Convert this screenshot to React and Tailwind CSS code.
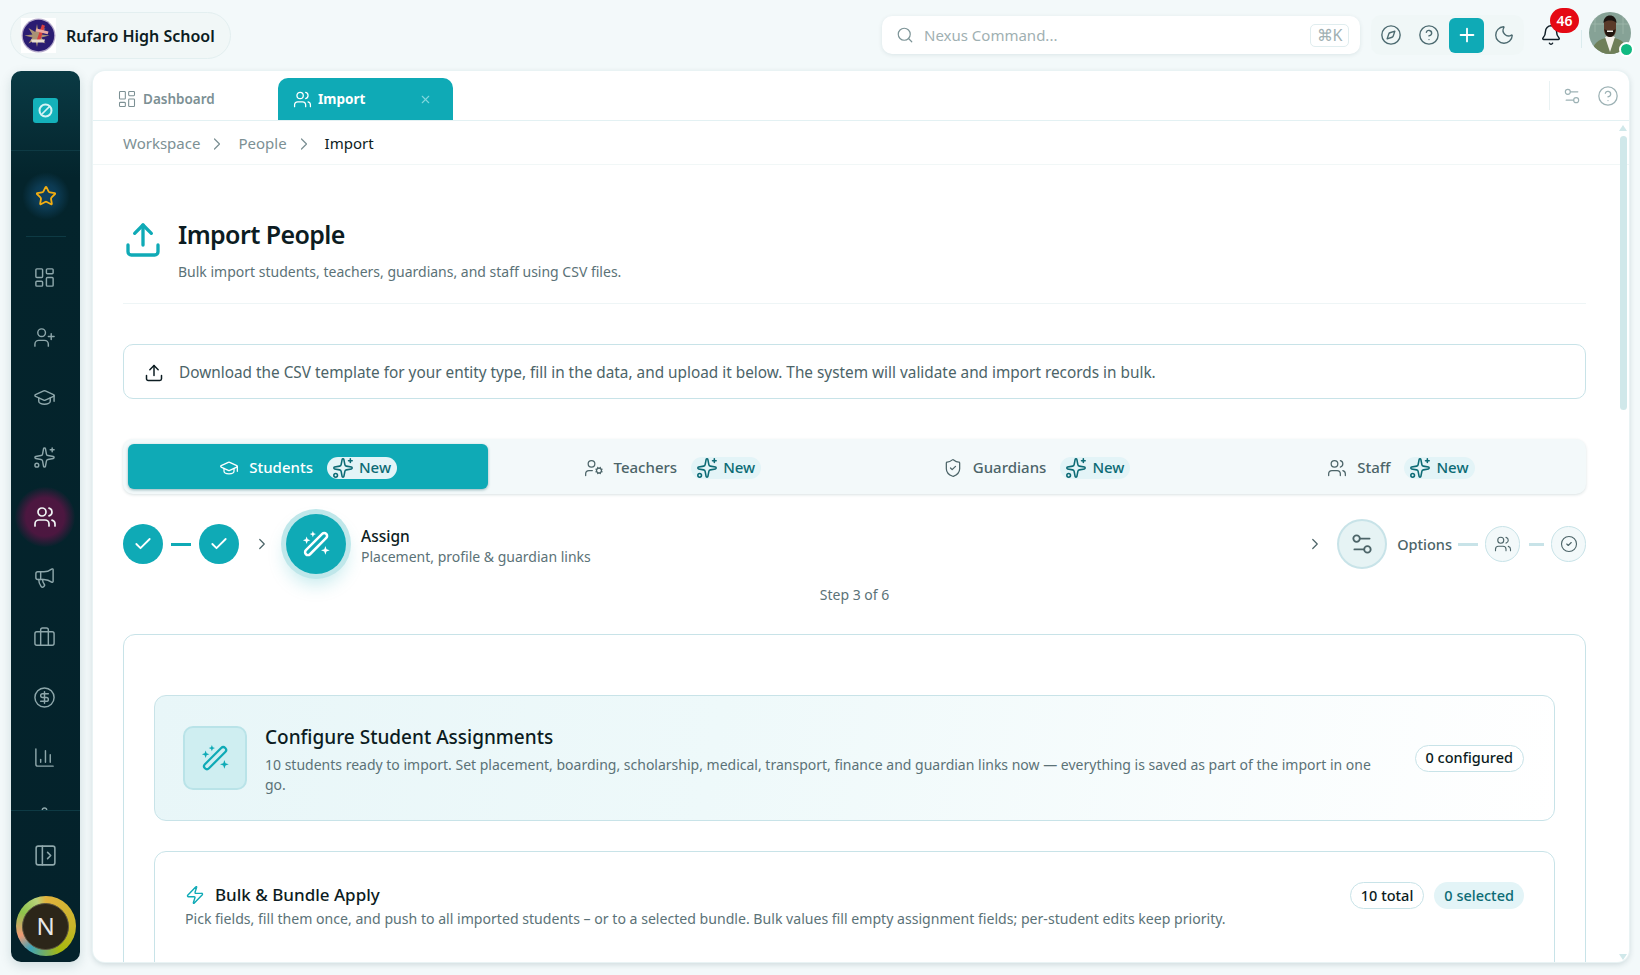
import {
  Bell,
  Briefcase,
  ChartColumn,
  Check,
  ChevronRight,
  CircleCheck,
  CircleDollarSign,
  CircleHelp,
  Compass,
  GraduationCap,
  LayoutDashboard,
  Megaphone,
  Moon,
  PanelLeftOpen,
  Plus,
  Search,
  Settings,
  Settings2,
  ShieldCheck,
  Sparkles,
  Star,
  Upload,
  UserCog,
  UserPlus,
  Users,
  X,
  Zap,
} from 'lucide-react';

const FONT = "font-['Noto_Sans','Liberation_Sans',sans-serif]";

const RAIL_ICONS = [LayoutDashboard, UserPlus, GraduationCap, Sparkles];
const RAIL_ICONS_2 = [Megaphone, Briefcase, CircleDollarSign, ChartColumn, Settings];

const PEOPLE_TABS = [
  { label: 'Students', icon: GraduationCap, active: true },
  { label: 'Teachers', icon: UserCog },
  { label: 'Guardians', icon: ShieldCheck },
  { label: 'Staff', icon: Users },
];

function WandIcon({ size, strokeWidth = 2 }) {
  return (
    <svg width={size} height={size} viewBox="0 0 24 24" fill="none">
      <rect
        x="9.8"
        y="0.5"
        width="4.6"
        height="23"
        rx="2.3"
        stroke="currentColor"
        strokeWidth={strokeWidth}
        transform="rotate(45 12 12)"
      />
      <path d="M9.5 1.5l.7 1.8 1.8.7-1.8.7-.7 1.8-.7-1.8L7 4l1.8-.7z" fill="currentColor" />
      <path d="M4.5 6l.8 2.2 2.2.8-2.2.8-.8 2.2-.8-2.2L1.5 9l2.2-.8z" fill="currentColor" />
      <path d="M19.5 13.5l.9 2.6 2.6.9-2.6.9-.9 2.6-.9-2.6-2.6-.9 2.6-.9z" fill="currentColor" />
    </svg>
  );
}

function SchoolLogo() {
  return (
    <svg width="35" height="35" viewBox="0 0 35 35" className="shrink-0">
      <rect width="35" height="35" fill="#ffffff" />
      <circle cx="17.5" cy="17.5" r="17" fill="#b3a8c9" />
      <circle cx="17.5" cy="17.5" r="15.7" fill="#2a1c72" />
      <path d="M16 6l1.4 8 7-4-4 6.5 8 1-8 2 4 6-7-3.5-1.4 7-1.6-7-7 3.5 4-6-8-2 8-1-4-6.5 7 4z" fill="#a99274" />
      <path d="M21 6.5l3 1.2-5.2 15.5-3-1.2z" fill="#d8413f" />
      <path d="M15.5 10.5l12 3-.8 2.8-12-3z" fill="#e8a8a0" />
      <path d="M10 21.5h14l-1 3H11z" fill="#e9dfcf" />
    </svg>
  );
}

function Avatar() {
  return (
    <svg width="42" height="42" viewBox="0 0 42 42" className="rounded-full">
      <rect width="42" height="42" fill="#86a296" />
      <path d="M0 12h42M6 0v20M34 4v18" stroke="#a5bcb0" strokeWidth="0.7" />
      <path d="M3 42c0-10 6-15 18-17 12 2 18 7 18 17z" fill="#6f7f58" />
      <path d="M16 25l5 15 5-15-5-2z" fill="#f3f1ea" />
      <path d="M15 11c0-4 2.500-6 6-6s6 2 6 6v6c0 5-2.500 8-6 8s-6-3-6-8z" fill="#5a3a29" />
      <path d="M14.500 11c0-5 3-7.500 6.500-7.500s6.500 2.500 6.500 7.500c-2-2-4-2.500-6.500-2.500s-4.500.5-6.500 2.500z" fill="#1b1410" />
      <path d="M15.500 17c2 2 9 2 11 0-.5 5-2.500 8-5.500 8s-5-3-5.500-8z" fill="#21160f" />
      <path d="M18 18.500h6v1.600h-6z" fill="#f4f1ea" />
    </svg>
  );
}

function NewChip() {
  return (
    <span className="flex items-center gap-[5px] rounded-full pl-[5px] pr-[6px] h-[22px] text-[15px] font-medium bg-[#e3f4f7] text-[#0c6b75]">
      <Sparkles size={22} strokeWidth={1.7} />
      New
    </span>
  );
}

function Rail() {
  return (
    <aside className="w-[69px] shrink-0 rounded-[10px] overflow-hidden flex flex-col items-center bg-[linear-gradient(180deg,#0a3a44_0%,#04242c_12%,#04222b_100%)] shadow-[0_4px_12px_rgba(0,60,70,0.15)]">
      <div className="h-[80px] shrink-0 w-full flex items-center justify-center border-b border-[#0e3a44]">
        <div className="w-[25px] h-[25px] rounded-[3px] bg-[#14b1ba] flex items-center justify-center">
          <svg width="17" height="17" viewBox="0 0 17 17" fill="none">
            <circle cx="8.500" cy="8.500" r="6" stroke="#d5f3f5" strokeWidth="2" />
            <path d="M5 12 12.500 4.500" stroke="#d5f3f5" strokeWidth="1.700" />
          </svg>
        </div>
      </div>
      <div className="h-[86px] shrink-0 w-10 flex items-center justify-center border-b border-[#0e3a44]">
        <div className="mt-[5px] w-12 h-12 shrink-0 rounded-full flex items-center justify-center bg-[radial-gradient(circle,#0f4162_0%,#0c3a52_35%,rgba(4,34,43,0)_70%)]">
          <Star size={22} strokeWidth={2} className="text-[#f2ad12]" />
        </div>
      </div>
      <div className="flex-1 min-h-0 w-full flex flex-col items-center pt-[10px] pr-[2px] overflow-hidden">
        {RAIL_ICONS.map((Icon, i) => (
          <div key={i} className="h-[60px] shrink-0 flex items-center justify-center text-[#8ea7ab]">
            <Icon size={23} strokeWidth={1.5} />
          </div>
        ))}
        <div className="h-[60px] shrink-0 flex items-center justify-center">
          <div className="w-[60px] h-[60px] rounded-full bg-[radial-gradient(circle,#4f1741_0%,#4c1740_45%,rgba(4,34,43,0)_72%)] flex items-center justify-center text-[#f0f4f4]">
            <Users size={24} strokeWidth={1.7} />
          </div>
        </div>
        {RAIL_ICONS_2.map((Icon, i) => (
          <div key={i} className="h-[60px] shrink-0 flex items-center justify-center text-[#8ea7ab]">
            <Icon size={23} strokeWidth={1.5} />
          </div>
        ))}
      </div>
      <div className="w-full border-t border-[#0e3a44] flex flex-col items-center">
        <div className="h-[85px] pt-[3px] flex items-center justify-center text-[#8ea7ab]">
          <PanelLeftOpen size={25} strokeWidth={1.5} />
        </div>
        <div className="mb-1.5 w-[60px] h-[60px] rounded-full bg-[conic-gradient(#e2b33d_0deg,#c9b52a_90deg,#a7b80e_150deg,#3fa4b8_215deg,#ef9a74_250deg,#8dc34b_300deg,#b8d37a_340deg,#e2b33d_360deg)] flex items-center justify-center">
          <div className="w-[47px] h-[47px] rounded-full bg-[#2c2619] border border-[#5a5440] flex items-center justify-center text-[#e8e8e8] text-[24px] font-normal">
            N
          </div>
        </div>
      </div>
    </aside>
  );
}

function TopBar() {
  return (
    <header className="h-[71px] pl-2.5 pr-[9px] flex items-start">
      <div className="mt-3 h-[47px] w-[221px] rounded-full bg-[#f1f7f7] border border-[#e3eff0] pl-2.5 flex items-center gap-2.5">
        <SchoolLogo />
        <span className="text-[16px] font-semibold text-[#0c1c22] whitespace-nowrap">Rufaro High School</span>
      </div>
      <div className="ml-auto flex items-start">
        <div className="mt-4 w-[478px] h-[38px] rounded-[10px] bg-white shadow-[0_1px_4px_rgba(0,60,70,0.1)] flex items-center pl-[14px] pr-[11px]">
          <Search size={18} strokeWidth={1.6} className="text-[#7d9497]" />
          <span className="ml-2.5 pt-[1px] text-[15px] text-[#9fb0b2]">Nexus Command...</span>
          <span className="ml-auto w-[39px] h-[23px] rounded-[5px] border border-[#e0edef] flex items-center justify-center text-[16px] text-[#9fb0b2]">
            ⌘K
          </span>
        </div>
        <div className="mt-[15px] ml-[11px] w-[153px] h-10 rounded-[10px] bg-[#f0f7f7] flex items-center pl-[9px] text-[#4c6a70]">
          <Compass size={22} strokeWidth={1.5} />
          <CircleHelp size={22} strokeWidth={1.5} className="ml-4" />
          <div className="ml-[9px] w-[35px] h-[35px] rounded-[6px] bg-[#0faab6] flex items-center justify-center text-white">
            <Plus size={22} strokeWidth={2} />
          </div>
          <Moon size={22} strokeWidth={1.5} className="ml-[9px]" />
        </div>
        <div className="relative mt-[15px] ml-[7px] w-10 h-10 flex items-center justify-center text-[#0f1e26]">
          <Bell size={22} strokeWidth={1.6} />
          <span className="absolute -top-[7px] left-[19px] w-[29px] h-[25px] rounded-full bg-[#e50914] text-white text-[14px] font-semibold flex items-center justify-center">
            46
          </span>
        </div>
        <div className="mt-[30px] ml-[10px] w-px h-[18px] bg-[#dbecee]" />
        <div className="relative mt-3 ml-[7px]">
          <Avatar />
          <span className="absolute -right-[3px] -bottom-[3px] w-[15px] h-[15px] rounded-full bg-[#10b981] border-2 border-white" />
        </div>
      </div>
    </header>
  );
}

function DocTabs() {
  return (
    <div className="h-[50px] shrink-0 border-b border-[#e3f1f3] flex items-end pl-2">
      <div className="w-[177px] h-[42px] pl-4 flex items-center gap-[6px] text-[#7c9094] text-[13.5px] font-semibold">
        <LayoutDashboard size={20} strokeWidth={1.3} />
        <span className="pt-[1px]">Dashboard</span>
      </div>
      <div className="w-[175px] h-[42px] rounded-t-[10px] bg-[#0faab6] text-white flex items-center pl-[15px] text-[13.5px] font-bold">
        <Users size={19} strokeWidth={1.6} />
        <span className="ml-[6px] pt-[1px]">Import</span>
        <X size={13} className="ml-auto mr-[21px] text-[#7fd6dc]" />
      </div>
      <div className="ml-auto self-stretch flex items-center pr-[10px] gap-[15px] text-[#9db2b5] my-2.5 pl-[12px] border-l border-[#e9f2f3]">
        <Settings2 size={20} strokeWidth={1.4} />
        <CircleHelp size={22} strokeWidth={1.4} />
      </div>
    </div>
  );
}

function PeopleTabs() {
  return (
    <div className="mt-[40px] h-[55px] rounded-[10px] bg-[#f3f9fa] shadow-[0_1px_3px_rgba(0,60,70,0.15)] p-[5px] grid grid-cols-4 gap-1">
      {PEOPLE_TABS.map((t) => {
        const Icon = t.icon;
        return (
          <div
            key={t.label}
            className={`flex items-center justify-center gap-2.5 rounded-[6px] pt-[2px] text-[15px] font-medium ${
              t.active
                ? 'bg-[#0faab6] text-white shadow-[0_1px_3px_rgba(0,80,90,0.4)]'
                : 'text-[#4c6468]'
            }`}
          >
            <Icon size={20} strokeWidth={1.5} />
            {t.label}
            <span className="ml-1">
              <NewChip />
            </span>
          </div>
        );
      })}
    </div>
  );
}

function DoneStep() {
  return (
    <div className="w-10 h-10 rounded-full bg-[#0faab6] flex items-center justify-center text-white">
      <Check size={20} strokeWidth={2.2} />
    </div>
  );
}

function Stepper() {
  return (
    <>
      <div className="mt-[15px] h-[70px] flex items-center">
        <DoneStep />
        <div className="mx-2 w-5 h-[3px] bg-[#0faab6]" />
        <DoneStep />
        <ChevronRight size={18} strokeWidth={1.6} className="ml-[14px] text-[#4c6468]" />
        <div className="ml-[15px] w-[60px] h-[60px] rounded-full bg-[#0faab6] text-white flex items-center justify-center shadow-[0_0_0_5px_#bfe7ea,0_10px_18px_rgba(15,170,182,0.25)]">
          <WandIcon size={30} strokeWidth={2} />
        </div>
        <div className="ml-[15px] pt-[3px]">
          <div className="text-[15.5px] font-medium leading-[22px] text-[#0c1c22]">Assign</div>
          <div className="text-[14px] leading-[20px] text-[#5b7277]">Placement, profile &amp; guardian links</div>
        </div>
        <ChevronRight size={18} strokeWidth={1.6} className="ml-auto text-[#4c6468]" />
        <div className="ml-[13px] w-[50px] h-[50px] rounded-full bg-[#e6f3f4] border-2 border-[#c8e3e8] flex items-center justify-center text-[#4c6468]">
          <Settings2 size={26} strokeWidth={1.7} />
        </div>
        <span className="ml-[10px] pt-[2px] text-[14.5px] font-medium text-[#4c6468]">Options</span>
        <div className="ml-[6px] mr-[7px] w-5 h-[3px] bg-[#c8e3e8]" />
        <div className="w-[35px] h-9 rounded-full bg-[#f3f9fa] border border-[#c8e3e8] flex items-center justify-center text-[#4c6468]">
          <Users size={18} strokeWidth={1.5} />
        </div>
        <div className="ml-[9px] mr-[7px] w-[15px] h-[3px] bg-[#c8e3e8]" />
        <div className="w-[35px] h-9 rounded-full bg-[#f3f9fa] border border-[#c8e3e8] flex items-center justify-center text-[#4c6468]">
          <CircleCheck size={18} strokeWidth={1.5} />
        </div>
      </div>
      <div className="mt-[6px] text-center text-[14px] leading-5 text-[#5b7277]">Step 3 of 6</div>
    </>
  );
}

function Chip({ children, filled }) {
  return (
    <span
      className={`h-[27px] px-2.5 rounded-full flex items-center text-[14.5px] font-medium whitespace-nowrap ${
        filled ? 'bg-[#e3f4f7] text-[#0c6b75]' : 'bg-white border border-[#c8e3e8] text-[#0c1c22]'
      }`}
    >
      {children}
    </span>
  );
}

function WizardCard() {
  return (
    <div className="mt-[29px] border border-[#c8e3e8] rounded-[12px] px-[30px] pt-[60px] pb-10">
      <div className="h-[126px] rounded-[12px] border border-[#c8e3e8] bg-[linear-gradient(100deg,#e8f6f8_0%,#eef9fa_40%,#ffffff_100%)] pl-7 pr-[30px] flex items-center">
        <div className="w-16 h-16 shrink-0 rounded-[10px] bg-[#cfeef1] border-2 border-[#b9e3e8] flex items-center justify-center text-[#0faab6]">
          <WandIcon size={30} strokeWidth={1.8} />
        </div>
        <div className="ml-[18px] pt-[2px] flex-1">
          <div className="text-[19px] font-medium leading-7 text-[#0c1c22]">Configure Student Assignments</div>
          <p className="mt-1 text-[14px] leading-5 text-[#5b7277]">
            10 students ready to import. Set placement, boarding, scholarship, medical, transport, finance and guardian
            links now — everything is saved as part of the import in one go.
          </p>
        </div>
        <div className="ml-[30px] shrink-0">
          <Chip>0 configured</Chip>
        </div>
      </div>
      <div className="mt-[30px] h-[200px] rounded-[12px] border border-[#c8e3e8] pl-[30px] pr-[30px] pt-[29px]">
        <div className="flex items-start">
          <div className="flex-1">
            <div className="flex items-center gap-2.5">
              <Zap size={20} strokeWidth={1.7} className="text-[#0faab6]" />
              <span className="text-[17px] font-medium leading-7 text-[#0c1c22]">Bulk &amp; Bundle Apply</span>
            </div>
            <p className="text-[14.1px] leading-5 text-[#5b7277]">
              Pick fields, fill them once, and push to all imported students – or to a selected bundle. Bulk values fill
              empty assignment fields; per-student edits keep priority.
            </p>
          </div>
          <div className="pt-[1px] flex gap-2.5">
            <Chip>10 total</Chip>
            <Chip filled>0 selected</Chip>
          </div>
        </div>
      </div>
    </div>
  );
}

export default function App() {
  return (
    <div className={`${FONT} w-[1640px] h-[975px] overflow-hidden bg-[#f3f9fa]`}>
      <TopBar />
      <div className="h-[891px] pl-[11px] pr-[11px] flex gap-[13px]">
        <Rail />
        <main className="flex-1 min-w-0 rounded-[12px] bg-white shadow-[0_0_0_1px_#e9f3f4,0_2px_6px_rgba(0,50,60,0.18)] overflow-hidden flex flex-col">
          <DocTabs />
          <div className="relative flex-1 min-h-0 overflow-hidden">
            <div className="h-[44px] pt-[2px] border-b border-[#f1f7f7] pl-[30px] flex items-center text-[15px] text-[#7c9094]">
              Workspace
              <ChevronRight size={20} strokeWidth={1.5} className="ml-[7px] mr-[11px]" />
              People
              <ChevronRight size={20} strokeWidth={1.5} className="ml-[7px] mr-[11px]" />
              <span className="text-[#0c1c22]">Import</span>
            </div>
            <div className="pl-[30px] pr-[43px]">
              <div className="pt-[51px] pb-[21px] border-b border-[#eef5f6] flex items-start">
                <Upload size={40} strokeWidth={2} className="text-[#0faab6] mt-1" />
                <div className="ml-[15px]">
                  <h1 className="text-[25px] font-semibold leading-9 tracking-[-0.6px] text-[#0c1c22]">Import People</h1>
                  <p className="mt-2.5 text-[14px] leading-5 text-[#5b7277]">
                    Bulk import students, teachers, guardians, and staff using CSV files.
                  </p>
                </div>
              </div>
              <div className="mt-10 h-[55px] pt-[3px] rounded-[10px] border border-[#c8e3e8] flex items-center pl-[20px] text-[15.35px] text-[#4c6468]">
                <Upload size={20} strokeWidth={1.8} className="text-[#0c1c22]" />
                <span className="ml-[15px]">
                  Download the CSV template for your entity type, fill in the data, and upload it below. The system will
                  validate and import records in bulk.
                </span>
              </div>
              <PeopleTabs />
              <Stepper />
              <WizardCard />
            </div>
            <div className="absolute right-[1px] top-0 bottom-0 w-[10px]">
              <div className="mx-auto mt-1 w-0 h-0 border-x-[4px] border-x-transparent border-b-[6px] border-b-[#d0e8ea]" />
              <div className="mx-auto mt-[5px] w-[7px] h-[274px] rounded-full bg-[#d0e8ea]" />
              <div className="absolute bottom-[2px] left-[1px] w-0 h-0 border-x-[4px] border-x-transparent border-t-[6px] border-t-[#d0e8ea]" />
            </div>
          </div>
        </main>
      </div>
    </div>
  );
}
